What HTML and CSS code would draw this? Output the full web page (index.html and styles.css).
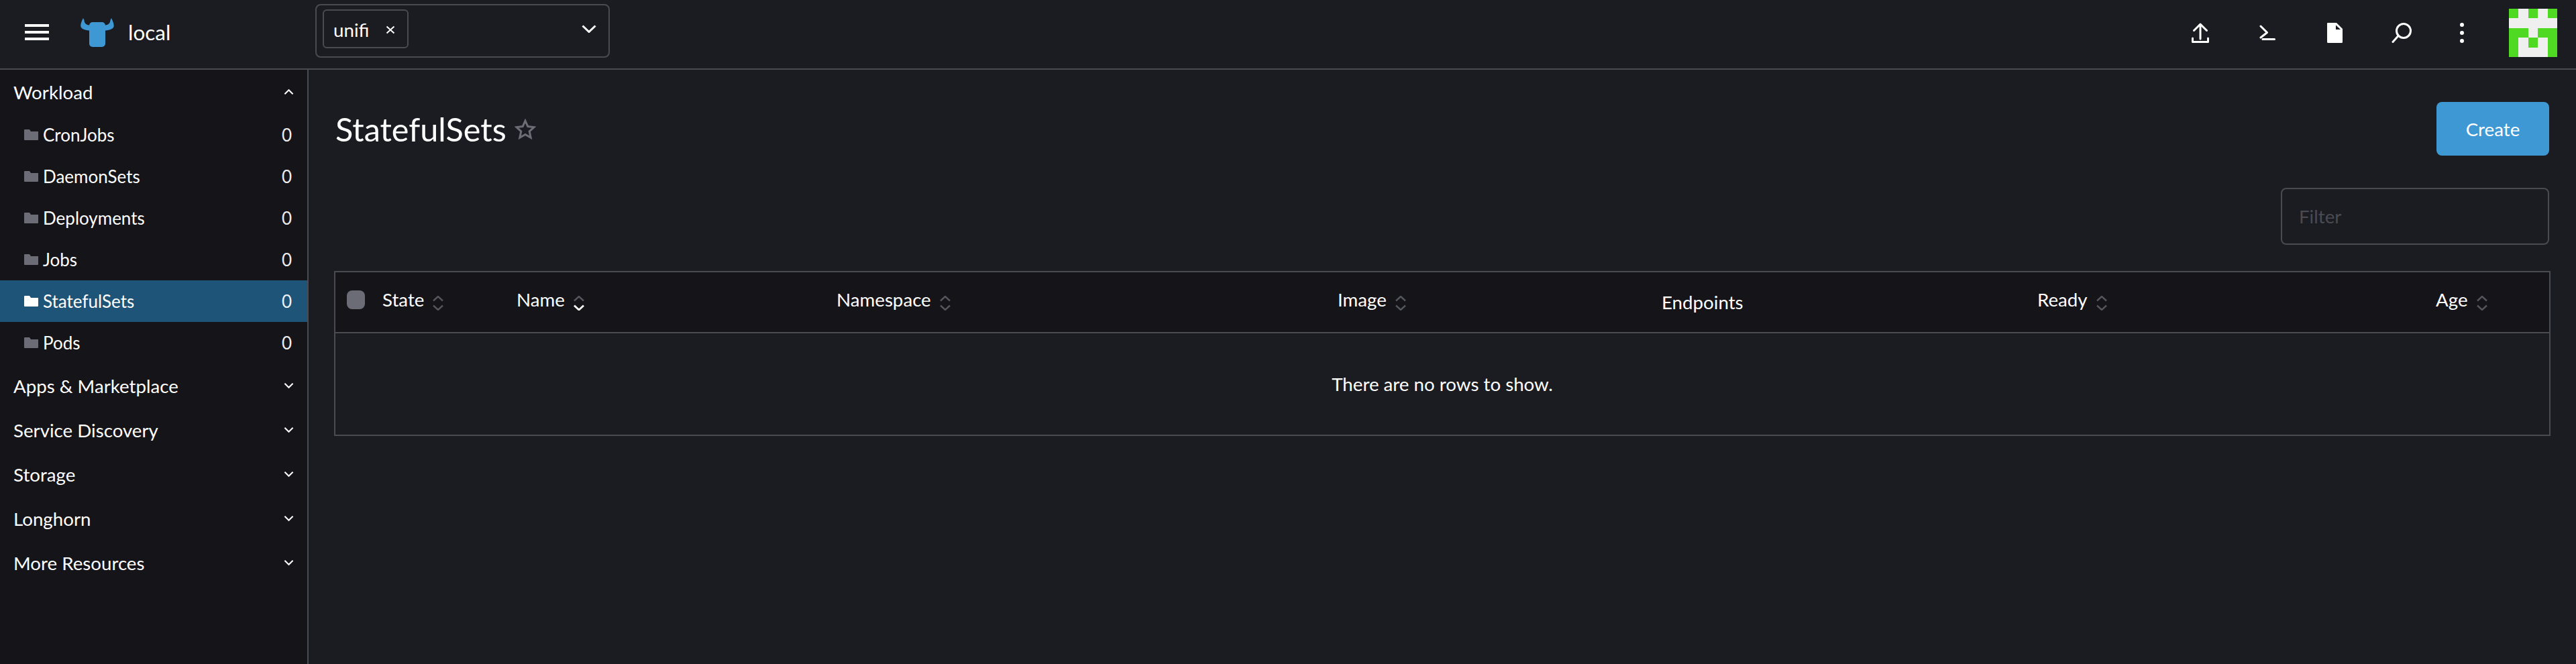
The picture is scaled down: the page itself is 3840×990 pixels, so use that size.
FILE: index.html
```html
<!DOCTYPE html>
<html lang="en">
<head>
    <meta charset="UTF-8">
    <title>StatefulSets</title>
    <link rel="stylesheet" href="styles.css">
</head>
<body>
    <header class="header">
        <div class="brand">
            <div class="burger"><span></span><span></span><span></span></div>
            <svg class="logo" viewBox="0 0 50 43">
                <path d="M4 0 L5.5 3 C5.5 7 8 10 13 10.5 V18.5 C6 18 1 16 .3 12 C0 8 2.5 3 4 0Z M46 0 L44.5 3 C44.5 7 42 10 37 10.5 V18.5 C44 18 49 16 49.7 12 C50 8 47.5 3 46 0Z"/>
                <rect x="13" y="6" width="24" height="37" rx="5"/>
            </svg>
            <span class="cluster">local</span>
        </div>
        <div class="ns-select">
            <div class="chip">
                <span>unifi</span>
                <svg class="chip-x" viewBox="0 0 14 13"><path d="M1.5 1.5 L12.5 11.5 M12.5 1.5 L1.5 11.5"/></svg>
            </div>
            <svg class="ns-caret" viewBox="0 0 22 12"><path d="M1.5 1.5 L11 10.5 L20.5 1.5"/></svg>
        </div>
        <div class="actions">
            <div class="action">
                <svg class="line-icon" width="26" height="30" viewBox="0 0 26 30"><path d="M13 2 V24 M3.5 11.5 L13 2 L22.5 11.5 M1.5 23 V28.5 H24.5 V23"/></svg>
            </div>
            <div class="action">
                <svg class="line-icon" width="24" height="24" viewBox="0 0 24 24"><path d="M2 2 L11.5 11.5 L2 19 M5 21.5 H22.5"/></svg>
            </div>
            <div class="action">
                <svg width="23" height="30" viewBox="0 0 23 30"><path class="doc" d="M1 0 H14 L23 9 V28.5 Q23 30 21.5 30 H1.5 Q0 30 0 28.5 V1 Q0 0 1 0Z"/><path class="doc-fold" d="M13 3.5 V10 H20Z"/></svg>
            </div>
            <div class="action">
                <svg class="line-icon" width="30" height="30" viewBox="0 0 30 30"><circle cx="18" cy="12" r="10.5"/><path d="M10 19.5 L2 28.5"/></svg>
            </div>
            <div class="action action-small">
                <svg class="dots" width="8" height="32" viewBox="0 0 8 32"><circle cx="4" cy="4" r="3"/><circle cx="4" cy="16" r="3"/><circle cx="4" cy="28" r="3"/></svg>
            </div>
            <svg class="avatar" width="72" height="72" viewBox="0 0 5 5" shape-rendering="crispEdges">
                <rect width="5" height="5" fill="#efefef"/>
                <path fill="#4fd922" d="M0 0h1v1H0z M2 0h1v1H2z M4 0h1v1H4z M0 2h2v1H0z M3 2h2v1H3z M0 3h1v2H0z M2 3h1v1H2z M4 3h1v2H4z"/>
            </svg>
        </div>
    </header>

    <div class="page">
        <nav class="sidebar">
            <div class="group">Workload
                <svg class="group-caret" viewBox="0 0 16 10"><path d="M1.5 8.5 L8 2 L14.5 8.5"/></svg>
            </div>
            <div class="item"><svg class="folder" viewBox="0 0 21 16"><path d="M0 1 Q0 0 1 0 H8 L10 3 H21 V15 Q21 16 20 16 H1 Q0 16 0 15Z"/></svg><span class="item-name">CronJobs</span><span class="item-count">0</span></div>
            <div class="item"><svg class="folder" viewBox="0 0 21 16"><path d="M0 1 Q0 0 1 0 H8 L10 3 H21 V15 Q21 16 20 16 H1 Q0 16 0 15Z"/></svg><span class="item-name">DaemonSets</span><span class="item-count">0</span></div>
            <div class="item"><svg class="folder" viewBox="0 0 21 16"><path d="M0 1 Q0 0 1 0 H8 L10 3 H21 V15 Q21 16 20 16 H1 Q0 16 0 15Z"/></svg><span class="item-name">Deployments</span><span class="item-count">0</span></div>
            <div class="item"><svg class="folder" viewBox="0 0 21 16"><path d="M0 1 Q0 0 1 0 H8 L10 3 H21 V15 Q21 16 20 16 H1 Q0 16 0 15Z"/></svg><span class="item-name">Jobs</span><span class="item-count">0</span></div>
            <div class="item active"><svg class="folder" viewBox="0 0 21 16"><path d="M0 1 Q0 0 1 0 H8 L10 3 H21 V15 Q21 16 20 16 H1 Q0 16 0 15Z"/></svg><span class="item-name">StatefulSets</span><span class="item-count">0</span></div>
            <div class="item"><svg class="folder" viewBox="0 0 21 16"><path d="M0 1 Q0 0 1 0 H8 L10 3 H21 V15 Q21 16 20 16 H1 Q0 16 0 15Z"/></svg><span class="item-name">Pods</span><span class="item-count">0</span></div>
            <div class="group">Apps &amp; Marketplace
                <svg class="group-caret" viewBox="0 0 16 10"><path d="M1.5 1.5 L8 8 L14.5 1.5"/></svg>
            </div>
            <div class="group">Service Discovery
                <svg class="group-caret" viewBox="0 0 16 10"><path d="M1.5 1.5 L8 8 L14.5 1.5"/></svg>
            </div>
            <div class="group">Storage
                <svg class="group-caret" viewBox="0 0 16 10"><path d="M1.5 1.5 L8 8 L14.5 1.5"/></svg>
            </div>
            <div class="group">Longhorn
                <svg class="group-caret" viewBox="0 0 16 10"><path d="M1.5 1.5 L8 8 L14.5 1.5"/></svg>
            </div>
            <div class="group">More Resources
                <svg class="group-caret" viewBox="0 0 16 10"><path d="M1.5 1.5 L8 8 L14.5 1.5"/></svg>
            </div>
        </nav>

        <main class="main">
            <div class="title-row">
                <h1>StatefulSets</h1>
                <svg class="star" viewBox="0 0 32 31"><path d="M16 3 L19.8 11.6 L29.2 12.6 L22.2 18.9 L24.2 28.2 L16 23.4 L7.8 28.2 L9.8 18.9 L2.8 12.6 L12.2 11.6Z"/></svg>
                <button class="create">Create</button>
            </div>
            <div class="filter-row">
                <input class="filter" type="text" placeholder="Filter">
            </div>
            <div class="table-wrap">
                <table class="table">
                    <thead>
                        <tr>
                            <th class="col-check"><div class="check"></div></th>
                            <th class="col-state">State<svg class="sort" viewBox="0 0 16 22"><path d="M1 7.5 L8 1 L15 7.5"/><path d="M1 14.5 L8 21 L15 14.5"/></svg></th>
                            <th class="col-name">Name<svg class="sort" viewBox="0 0 16 22"><path d="M1 7.5 L8 1 L15 7.5"/><path class="on" d="M1 14.5 L8 21 L15 14.5"/></svg></th>
                            <th class="col-ns">Namespace<svg class="sort" viewBox="0 0 16 22"><path d="M1 7.5 L8 1 L15 7.5"/><path d="M1 14.5 L8 21 L15 14.5"/></svg></th>
                            <th class="col-image">Image<svg class="sort" viewBox="0 0 16 22"><path d="M1 7.5 L8 1 L15 7.5"/><path d="M1 14.5 L8 21 L15 14.5"/></svg></th>
                            <th class="col-endpoints">Endpoints</th>
                            <th class="col-ready">Ready<svg class="sort" viewBox="0 0 16 22"><path d="M1 7.5 L8 1 L15 7.5"/><path d="M1 14.5 L8 21 L15 14.5"/></svg></th>
                            <th class="col-age">Age<svg class="sort" viewBox="0 0 16 22"><path d="M1 7.5 L8 1 L15 7.5"/><path d="M1 14.5 L8 21 L15 14.5"/></svg></th>
                        </tr>
                    </thead>
                    <tbody>
                        <tr><td class="no-rows" colspan="8">There are no rows to show.</td></tr>
                    </tbody>
                </table>
            </div>
        </main>
    </div>
</body>
</html>
```

FILE: styles.css
```css
* {
    box-sizing: border-box;
}

html, body {
    height: 100%;
}

body {
    margin: 0;
    display: flex;
    flex-direction: column;
    overflow: hidden;
    background: #1b1c21;
    color: #fff;
    font-family: Lato, "Noto Sans", sans-serif;
    font-size: 27.7px;
}

/* top bar */
.header {
    display: flex;
    flex: none;
    height: 104px;
    border-bottom: 2px solid #4a4b52;
}

.brand {
    display: flex;
    align-items: center;
    width: 460px;
    height: 96px;
    padding-left: 37px;
}

.burger {
    display: flex;
    flex-direction: column;
    gap: 6px;
    width: 36px;
}

.burger span {
    height: 4px;
    background: #fff;
}

.logo {
    width: 50px;
    height: 43px;
    margin-left: 47px;
    fill: #3d98d3;
}

.cluster {
    margin-left: 21px;
    font-size: 31.5px;
}

.ns-select {
    display: flex;
    align-items: center;
    justify-content: space-between;
    width: 439px;
    height: 80px;
    margin: 6px 0 0 10px;
    padding: 8px 18px 14px 9px;
    border: 2px solid #4a4b52;
    border-radius: 8px;
}

.chip {
    display: flex;
    align-items: center;
    width: 128px;
    height: 58px;
    padding: 3px 0 0 14px;
    border: 2px solid #4a4b52;
    border-radius: 6px;
}

.chip-x {
    width: 14px;
    height: 13px;
    margin-left: 25px;
    fill: none;
    stroke: #fff;
    stroke-width: 2;
}

.ns-caret {
    width: 22px;
    height: 12px;
    fill: none;
    stroke: #fff;
    stroke-width: 3;
}

.actions {
    display: flex;
    align-items: center;
    height: 98px;
    margin-left: auto;
    padding-right: 28px;
}

.action {
    display: flex;
    align-items: center;
    justify-content: center;
    width: 100px;
}

.action-small {
    width: 80px;
    margin-right: 30px;
}

.line-icon {
    fill: none;
    stroke: #fff;
    stroke-width: 3;
    stroke-linecap: round;
    stroke-linejoin: round;
}

.doc {
    fill: #fff;
}

.doc-fold {
    fill: #1b1c21;
}

.dots {
    fill: #fff;
}

.avatar {
    display: block;
}

/* below the bar */
.page {
    display: flex;
    flex: 1;
    min-height: 0;
}

.sidebar {
    flex: none;
    width: 460px;
    background: #141419;
    border-right: 2px solid #4a4b52;
}

.group {
    display: flex;
    align-items: center;
    justify-content: space-between;
    height: 66px;
    padding: 0 20px 0 20px;
}

.group-caret {
    width: 15px;
    height: 10px;
    fill: none;
    stroke: #fff;
    stroke-width: 2.2;
}

.item {
    display: flex;
    align-items: center;
    height: 62px;
    padding: 0 23px 0 36px;
    font-size: 26px;
}

.item-name {
    flex: 1;
    margin-left: 7px;
}

.item-count {
    opacity: 0.92;
}

.folder {
    width: 21px;
    height: 16px;
    fill: #6c6c76;
}

.item.active {
    background: #1d5478;
}

.item.active .folder {
    fill: #fff;
}

.main {
    flex: 1;
    min-width: 0;
    padding: 48px 38px 0;
}

.title-row {
    display: flex;
    align-items: center;
    height: 80px;
    padding: 0 2px;
}

.title-row h1 {
    margin: 0;
    font-size: 48.6px;
    font-weight: 400;
}

.star {
    width: 32px;
    height: 31px;
    margin-left: 12px;
    fill: none;
    stroke: #6c6c76;
    stroke-width: 3;
}

.create {
    width: 168px;
    height: 80px;
    margin-left: auto;
    border: 0;
    border-radius: 8px;
    background: #3d98d3;
    color: #fff;
    font: inherit;
}

.filter-row {
    display: flex;
    justify-content: flex-end;
    margin-top: 48px;
    padding: 0 2px;
}

.filter {
    width: 400px;
    height: 85px;
    padding: 0 25px;
    border: 2px solid #4a4b52;
    border-radius: 8px;
    background: transparent;
    color: #fff;
    font: inherit;
}

.filter::placeholder {
    color: #4a4b52;
    opacity: 1;
}

.table-wrap {
    margin-top: 39px;
    border: 2px solid #4a4b52;
}

.table {
    width: 100%;
    table-layout: fixed;
    border-collapse: collapse;
}

.table th {
    height: 90px;
    padding: 0 0 8px;
    border-bottom: 2px solid #4a4b52;
    background: #141419;
    font-weight: 400;
    text-align: left;
}

.col-check { width: 70px; }
.col-state { width: 200px; }
.col-name { width: 477px; }
.col-ns { width: 747px; }
.col-image { width: 483px; }
.col-endpoints { width: 560px; }
.col-ready { width: 594px; }
.col-age { width: 169px; }

.table th.col-endpoints {
    padding-bottom: 0;
}

.check {
    width: 27px;
    height: 28px;
    margin-left: 17px;
    border-radius: 8px;
    background: #6c6c76;
}

.sort {
    width: 16px;
    height: 22px;
    margin-left: 13px;
    vertical-align: -6px;
    fill: none;
    stroke: #55565d;
    stroke-width: 2.4;
}

.sort .on {
    stroke: #fff;
    stroke-width: 2.8;
}

.no-rows {
    height: 152px;
    padding: 0;
    text-align: center;
}
```
